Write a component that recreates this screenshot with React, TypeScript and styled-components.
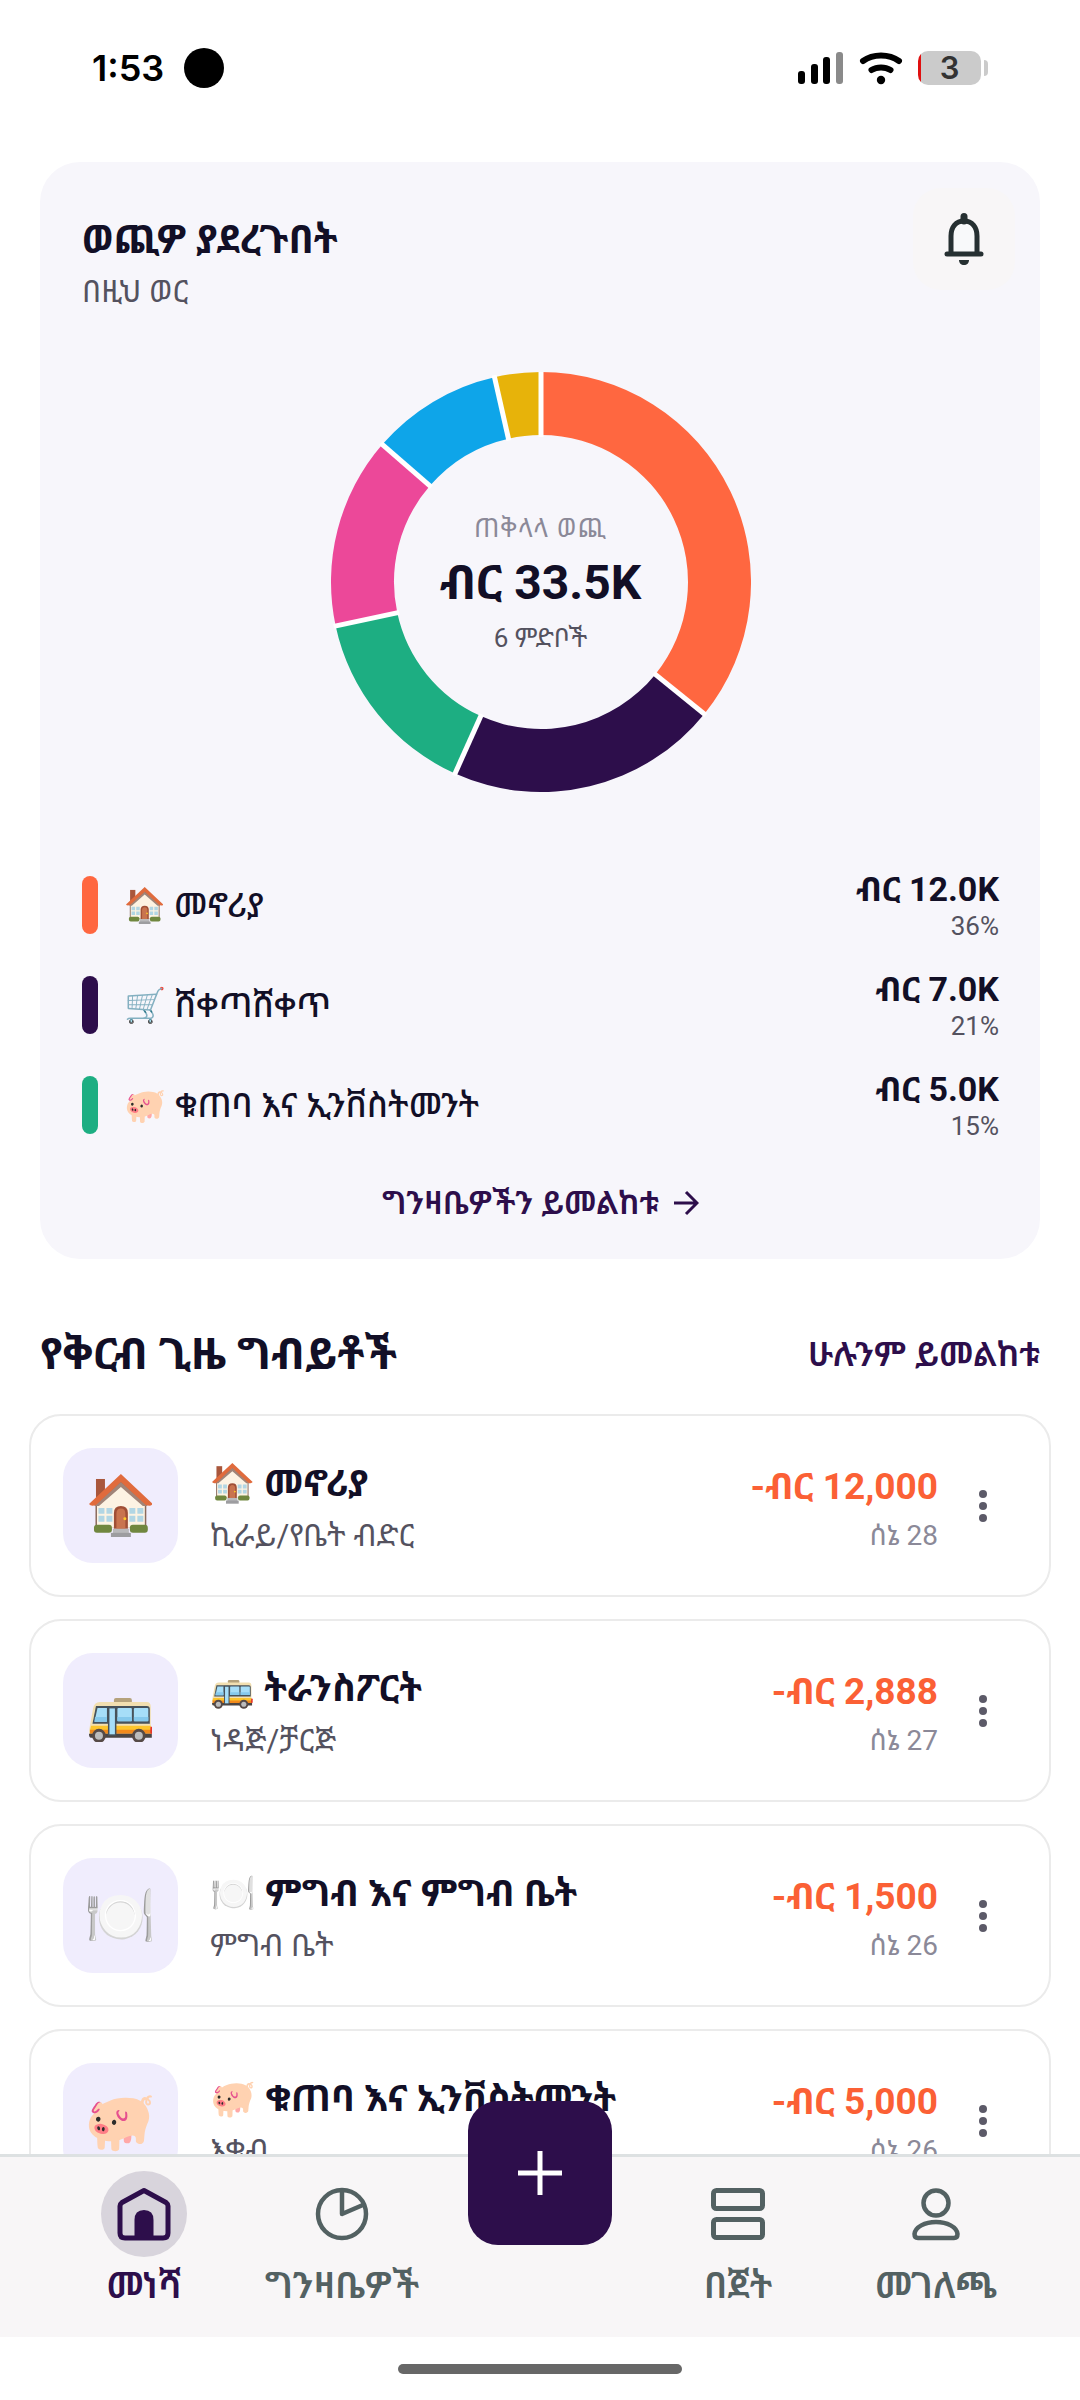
import * as React from "react";
import styled, { createGlobalStyle } from "styled-components";

type Emoji = "house" | "bus" | "cart" | "plate" | "pig";

interface Slice {
  value: number;
  color: string;
}

interface Category {
  emoji: Emoji;
  name: string;
  amount: string;
  percent: string;
  color: string;
}

interface Expense {
  emoji: Emoji;
  category: string;
  detail: string;
  amount: string;
  date: string;
}

const slices: Slice[] = [
  { value: 12, color: "#ff6740" },
  { value: 7, color: "#2d0e4b" },
  { value: 5, color: "#1dae82" },
  { value: 4.93, color: "#ec4899" },
  { value: 3.38, color: "#0ea5e9" },
  { value: 1.19, color: "#e7b30a" },
];

const categories: Category[] = [
  { emoji: "house", name: "መኖሪያ", amount: "ብር 12.0K", percent: "36%", color: "#ff6740" },
  { emoji: "cart", name: "ሸቀጣሸቀጥ", amount: "ብር 7.0K", percent: "21%", color: "#2d0e4b" },
  { emoji: "pig", name: "ቁጠባ እና ኢንቨስትመንት", amount: "ብር 5.0K", percent: "15%", color: "#1dae82" },
];

const expenses: Expense[] = [
  { emoji: "house", category: "መኖሪያ", detail: "ኪራይ/የቤት ብድር", amount: "-ብር 12,000", date: "ሰኔ 28" },
  { emoji: "bus", category: "ትራንስፖርት", detail: "ነዳጅ/ቻርጅ", amount: "-ብር 2,888", date: "ሰኔ 27" },
  { emoji: "plate", category: "ምግብ እና ምግብ ቤት", detail: "ምግብ ቤት", amount: "-ብር 1,500", date: "ሰኔ 26" },
  { emoji: "pig", category: "ቁጠባ እና ኢንቨስትመንት", detail: "እቁብ", amount: "-ብር 5,000", date: "ሰኔ 26" },
];

const HouseEmoji = () => (
  <EmojiSvg viewBox="0 0 64 64" aria-hidden="true">
    <rect x="7" y="5" width="9" height="20" fill="#a9573c" />
    <path d="M6.500 30 L32 7 L57.500 30 V54 H6.500 Z" fill="#8a6a5c" />
    <path d="M8 30 L32 10 L56 30 V54 H8 Z" fill="#fdf3e3" />
    <path d="M32 8 L59 32 L54 32 L32 13 L10 32 L5 32 Z" fill="#a08478" />
    <path d="M32 0 L64 30 Q62 33 57 31 L32 8 L7 31 Q2 33 0 30 Z" fill="#e06b3d" />
    <g fill="#b2d6e4">
      <path d="M9.500 34 h6 v6 h-6 Z M17.500 34 h6 v6 h-6 Z M9.500 42 h6 v6 h-6 Z M17.500 42 h6 v6 h-6 Z" />
      <path d="M40.500 34 h6 v6 h-6 Z M48.500 34 h6 v6 h-6 Z M40.500 42 h6 v6 h-6 Z M48.500 42 h6 v6 h-6 Z" />
    </g>
    <path d="M25 55 V39 Q25 32 32 32 Q39 32 39 39 V55 Z" fill="#a04f36" />
    <path d="M27.500 55 V40 Q27.500 34.500 32 34.500 Q36.500 34.500 36.500 40 V55 Z" fill="#c9744f" />
    <circle cx="36" cy="45" r="1.500" fill="#ffca28" />
    <rect x="5" y="51" width="18" height="8" rx="3" fill="#70873f" />
    <rect x="41" y="51" width="18" height="8" rx="3" fill="#70873f" />
    <rect x="24" y="55" width="16" height="5" fill="#b9b9bb" />
    <rect x="22" y="59" width="20" height="5" fill="#9d9da0" />
  </EmojiSvg>
);

const BusEmoji = () => (
  <EmojiSvg viewBox="0 0 64 64" aria-hidden="true">
    <rect x="25" y="19" width="18" height="7" rx="2" fill="#b5a27c" />
    <path d="M4 30 Q5 23 11 23 H58 Q62 23 62 28 V57 H2 Q0 57 0 52 Z" fill="#f2dfb0" />
    <path d="M7 27 H58 Q61 27 61 30 V45 H3.500 Z" fill="#47525a" />
    <path d="M8.500 29 H18 V43 H5.500 Z" fill="#a6def8" />
    <rect x="28.500" y="29" width="14.500" height="13.500" rx="1" fill="#a6def8" />
    <rect x="45" y="29" width="14.500" height="13.500" rx="1" fill="#a6def8" />
    <path d="M6 38 H18 V43 H5.500 Z M28.500 38 H43 V42.500 H28.500 Z M45 38 H59.500 V42.500 H45 Z" fill="#85c9ec" />
    <path d="M2 47 H62 V52 H1 Z" fill="#fcc52c" />
    <path d="M1 51 H63 V55 H1 Z" fill="#f28a1c" />
    <path d="M0 55 H63 V59 H2 Q0 59 0 55 Z" fill="#4b4543" />
    <rect x="19" y="28" width="8.500" height="29" fill="#47525a" />
    <rect x="20.500" y="29.500" width="5.500" height="26" fill="#a6def8" />
    <rect x="61.500" y="48" width="2.500" height="7" rx="1" fill="#e5352d" />
    <circle cx="10" cy="57" r="7" fill="#564a47" />
    <circle cx="10" cy="57" r="4" fill="#bcbcbc" />
    <circle cx="50" cy="57" r="7" fill="#564a47" />
    <circle cx="50" cy="57" r="4" fill="#bcbcbc" />
  </EmojiSvg>
);

const emojiGlyphs: Record<Emoji, React.ReactNode> = {
  house: <HouseEmoji />,
  bus: <BusEmoji />,
  cart: "🛒",
  plate: "🍽️",
  pig: "🐖",
};

const point = (angle: number, radius: number) =>
  `${210 + radius * Math.sin(angle)} ${210 - radius * Math.cos(angle)}`;

const ringPath = (from: number, to: number) => {
  const large = to - from > Math.PI ? 1 : 0;
  return [
    `M ${point(from, 210)}`,
    `A 210 210 0 ${large} 1 ${point(to, 210)}`,
    `L ${point(to, 147)}`,
    `A 147 147 0 ${large} 0 ${point(from, 147)}`,
    "Z",
  ].join(" ");
};

const Donut = () => {
  const total = slices.reduce((sum, slice) => sum + slice.value, 0);
  let start = 0;
  const arcs = slices.map((slice) => {
    const from = start;
    start += (slice.value / total) * Math.PI * 2;
    return { from, to: start, color: slice.color };
  });
  return (
    <DonutSvg viewBox="0 0 420 420" aria-hidden="true">
      {arcs.map((arc) => (
        <path key={arc.color} d={ringPath(arc.from, arc.to)} fill={arc.color} />
      ))}
      {arcs.map((arc) => (
        <path
          key={arc.color}
          d={`M ${point(arc.from, 145)} L ${point(arc.from, 212)}`}
          stroke="#ffffff"
          strokeWidth="5"
        />
      ))}
    </DonutSvg>
  );
};

const SignalIcon = () => (
  <svg width="46" height="34" viewBox="0 0 46 34" aria-hidden="true">
    <rect x="0" y="20" width="7" height="13" rx="3" />
    <rect x="13" y="13" width="7" height="20" rx="3" />
    <rect x="25" y="6" width="7" height="27" rx="3" />
    <rect x="38" y="1" width="7" height="32" rx="3" fill="#8a8a8a" />
  </svg>
);

const WifiIcon = () => (
  <svg width="44" height="34" viewBox="0 0 44 34" aria-hidden="true">
    <g fill="none" stroke="#000000" strokeWidth="6" strokeLinecap="round">
      <path d="M4 10 C14 2.500 30 2.500 40 10" />
      <path d="M12.500 19 C18 15.500 26 15.500 31.500 19" />
    </g>
    <circle cx="22" cy="29" r="4.200" />
  </svg>
);

const BellIcon = () => (
  <svg width="40" height="52" viewBox="0 0 40 52" aria-hidden="true">
    <path
      d="M7 40 V23 C7 14 12 8 20 8 C28 8 33 14 33 23 V40"
      fill="#f8f9fa"
      stroke="#263032"
      strokeWidth="5"
    />
    <path d="M3 41 H37" stroke="#263032" strokeWidth="5" strokeLinecap="round" />
    <path d="M20 3.500 V8" stroke="#263032" strokeWidth="7" strokeLinecap="round" />
    <path d="M15 47 H25 C25 50 23 52 20 52 C17 52 15 50 15 47 Z" fill="#263032" />
  </svg>
);

const ArrowIcon = () => (
  <svg width="26" height="26" viewBox="0 0 26 26" aria-hidden="true">
    <path d="M1 13 H24 M13 2 L24 13 L13 24" fill="none" stroke="#2d0e4b" strokeWidth="3" />
  </svg>
);

const DotsIcon = () => (
  <svg width="8" height="34" viewBox="0 0 8 34" fill="#5c5a68" aria-hidden="true">
    <circle cx="4" cy="5" r="4" />
    <circle cx="4" cy="17" r="4" />
    <circle cx="4" cy="29" r="4" />
  </svg>
);

const PlusIcon = () => (
  <svg width="44" height="44" viewBox="0 0 44 44" aria-hidden="true">
    <path d="M22 0 V44 M0 22 H44" stroke="#ffffff" strokeWidth="5" />
  </svg>
);

const HomeIcon = () => (
  <svg width="54" height="54" viewBox="0 0 54 54" aria-hidden="true">
    <path
      d="M27 3.500 L49 15.500 Q51 17 51 19 V46 Q51 51 46 51 H8 Q3 51 3 46 V19 Q3 17 5 15.500 Z"
      fill="none"
      stroke="currentColor"
      strokeWidth="5"
      strokeLinejoin="round"
    />
    <path d="M17.500 51 V33 Q17.500 23 27 23 Q36.500 23 36.500 33 V51 Z" fill="currentColor" />
  </svg>
);

const PieIcon = () => (
  <svg width="54" height="54" viewBox="0 0 54 54" aria-hidden="true">
    <g fill="none" stroke="currentColor" strokeWidth="4.500">
      <circle cx="27" cy="27" r="24" />
      <path d="M27 3 V27 L49 17.500" strokeLinejoin="round" />
    </g>
  </svg>
);

const BudgetIcon = () => (
  <svg width="54" height="54" viewBox="0 0 54 54" aria-hidden="true">
    <g fill="none" stroke="currentColor" strokeWidth="5">
      <rect x="2.500" y="3.500" width="49" height="18" rx="3" />
      <rect x="2.500" y="32.500" width="49" height="18" rx="3" />
    </g>
  </svg>
);

const ProfileIcon = () => (
  <svg width="54" height="54" viewBox="0 0 54 54" aria-hidden="true">
    <g fill="none" stroke="currentColor" strokeWidth="4.500">
      <circle cx="27" cy="16" r="12.500" />
      <path d="M9 51 Q5.500 51 5.500 47 C6 40 16 35 27 35 C38 35 48 40 48.500 47 Q48.500 51 45 51 Z" />
    </g>
  </svg>
);

const StatusRow = () => (
  <StatusBar>
    <Clock>
      1:53
      <Camera />
    </Clock>
    <StatusIcons>
      <SignalIcon />
      <WifiIcon />
      <Battery>
        <BatteryBody>3</BatteryBody>
        <BatteryTip />
      </Battery>
    </StatusIcons>
  </StatusBar>
);

const SpendingCard = () => (
  <Summary>
    <SummaryHeader>
      <div>
        <SummaryTitle>ወጪዎ ያደረጉበት</SummaryTitle>
        <SummaryPeriod>በዚህ ወር</SummaryPeriod>
      </div>
      <BellButton type="button" aria-label="notifications">
        <BellIcon />
      </BellButton>
    </SummaryHeader>
    <Chart>
      <Donut />
      <ChartCenter>
        <ChartLabel>ጠቅላላ ወጪ</ChartLabel>
        <ChartTotal>ብር 33.5K</ChartTotal>
        <ChartCount>6 ምድቦች</ChartCount>
      </ChartCenter>
    </Chart>
    <Legend>
      {categories.map((category) => (
        <LegendRow key={category.name}>
          <LegendMark color={category.color} />
          <LegendName>
            {emojiGlyphs[category.emoji]} {category.name}
          </LegendName>
          <div>
            <LegendAmount>{category.amount}</LegendAmount>
            <LegendPercent>{category.percent}</LegendPercent>
          </div>
        </LegendRow>
      ))}
    </Legend>
    <InsightsLink href="#insights">
      ግንዛቤዎችን ይመልከቱ
      <ArrowIcon />
    </InsightsLink>
  </Summary>
);

const ExpenseCard = ({ expense }: { expense: Expense }) => (
  <ExpenseItem>
    <ExpenseTile>{emojiGlyphs[expense.emoji]}</ExpenseTile>
    <ExpenseText>
      <ExpenseName>
        {emojiGlyphs[expense.emoji]} {expense.category}
      </ExpenseName>
      <ExpenseDetail>{expense.detail}</ExpenseDetail>
    </ExpenseText>
    <ExpenseFigures>
      <ExpenseAmount>{expense.amount}</ExpenseAmount>
      <ExpenseDate>{expense.date}</ExpenseDate>
    </ExpenseFigures>
    <MoreButton type="button" aria-label="more">
      <DotsIcon />
    </MoreButton>
  </ExpenseItem>
);

const BottomNav = () => (
  <Nav>
    <NavLink href="#home" $active>
      <NavIcon $active>
        <HomeIcon />
      </NavIcon>
      መነሻ
    </NavLink>
    <NavLink href="#insights">
      <NavIcon>
        <PieIcon />
      </NavIcon>
      ግንዛቤዎች
    </NavLink>
    <AddSlot>
      <AddButton type="button" aria-label="add">
        <PlusIcon />
      </AddButton>
    </AddSlot>
    <NavLink href="#budget">
      <NavIcon>
        <BudgetIcon />
      </NavIcon>
      በጀት
    </NavLink>
    <NavLink href="#profile">
      <NavIcon>
        <ProfileIcon />
      </NavIcon>
      መገለጫ
    </NavLink>
  </Nav>
);

export default function App() {
  return (
    <Screen>
      <GlobalStyle />
      <StatusRow />
      <Content>
        <SpendingCard />
        <SectionHeader>
          <SectionTitle>የቅርብ ጊዜ ግብይቶች</SectionTitle>
          <SectionLink href="#all">ሁሉንም ይመልከቱ</SectionLink>
        </SectionHeader>
        <ExpenseList>
          {expenses.map((expense) => (
            <ExpenseCard key={expense.category} expense={expense} />
          ))}
        </ExpenseList>
      </Content>
      <BottomNav />
      <HomeBar>
        <HomeIndicator />
      </HomeBar>
    </Screen>
  );
}

const GlobalStyle = createGlobalStyle`
  * {
    box-sizing: border-box;
  }
  body {
    margin: 0;
    background: #ffffff;
    color: #120f26;
    font-family: Roboto, "Noto Sans Ethiopic", "Noto Color Emoji", sans-serif;
  }
  h1, h2, p, ul {
    margin: 0;
    padding: 0;
  }
  ul {
    list-style: none;
  }
  button {
    border: 0;
    padding: 0;
    font: inherit;
    cursor: pointer;
  }
  a {
    text-decoration: none;
  }
  svg {
    display: block;
    flex-shrink: 0;
  }
`;

const EmojiSvg = styled.svg`
  display: inline-block;
  width: 1.1em;
  height: 1.1em;
  margin: 0 0.06em;
  vertical-align: -0.22em;
`;

const Screen = styled.div`
  display: flex;
  flex-direction: column;
  height: 100vh;
`;

const StatusBar = styled.header`
  display: flex;
  justify-content: space-between;
  align-items: center;
  height: 136px;
  padding: 0 92px;
`;
const Clock = styled.div`
  display: flex;
  align-items: center;
  gap: 20px;
  font-family: Inter, sans-serif;
  font-weight: 600;
  font-size: 36px;
  line-height: 40px;
  color: #000000;
`;
const Camera = styled.span`
  width: 40px;
  height: 40px;
  border-radius: 50%;
  background: #000000;
`;
const StatusIcons = styled.div`
  display: flex;
  align-items: center;
  gap: 15px;
`;
const Battery = styled.div`
  display: flex;
  align-items: center;
  gap: 3px;
`;
const BatteryBody = styled.div`
  width: 63px;
  height: 34px;
  border-radius: 10px;
  background: linear-gradient(to right, #e01010 3px, #cbcbcb 3px);
  font-family: Inter, sans-serif;
  font-weight: 600;
  font-size: 31px;
  line-height: 34px;
  text-align: center;
  color: #333333;
`;
const BatteryTip = styled.div`
  width: 4px;
  height: 16px;
  border-radius: 0 4px 4px 0;
  background: #cbcbcb;
`;

const Content = styled.main`
  flex: 1;
  min-height: 0;
  overflow: auto;
  scrollbar-width: none;
  padding: 26px 29px 0;
`;

const Summary = styled.section`
  margin: 0 11px;
  padding: 26px 41px 32px 42px;
  border-radius: 40px;
  background: #f7f6fb;
`;
const SummaryHeader = styled.div`
  display: flex;
  justify-content: space-between;
  align-items: flex-end;
  margin-right: -16px;
  height: 128px;
`;
const SummaryTitle = styled.h1`
  font-weight: 700;
  font-size: 39px;
  line-height: 56px;
`;
const SummaryPeriod = styled.p`
  font-size: 31px;
  line-height: 48px;
  color: #54525f;
`;
const BellButton = styled.button`
  display: flex;
  align-self: flex-start;
  justify-content: center;
  align-items: center;
  width: 102px;
  height: 102px;
  border-radius: 28px;
  background: #f8f6f7;
`;

const Chart = styled.div`
  display: grid;
  justify-items: center;
  align-items: center;
  margin: 56px 0 76px;
  > * {
    grid-area: 1 / 1;
  }
`;
const DonutSvg = styled.svg`
  width: 420px;
  height: 420px;
`;
const ChartCenter = styled.div`
  padding-top: 2px;
  text-align: center;
`;
const ChartLabel = styled.p`
  font-size: 26px;
  line-height: 38px;
  letter-spacing: 1px;
  color: #8b8998;
`;
const ChartTotal = styled.p`
  font-weight: 700;
  font-size: 48px;
  line-height: 72px;
`;
const ChartCount = styled.p`
  font-size: 26px;
  line-height: 38px;
  color: #54525f;
`;

const Legend = styled.ul`
  display: flex;
  flex-direction: column;
  gap: 26px;
`;
const LegendRow = styled.li`
  display: flex;
  align-items: center;
  text-align: right;
`;
const LegendMark = styled.span<{ color: string }>`
  width: 16px;
  height: 58px;
  border-radius: 8px;
  background: ${(props) => props.color};
`;
const LegendName = styled.p`
  flex: 1;
  padding-left: 26px;
  font-weight: 500;
  font-size: 34px;
  line-height: 42px;
  text-align: left;
`;
const LegendAmount = styled.p`
  font-weight: 700;
  font-size: 34px;
  line-height: 42px;
`;
const LegendPercent = styled.p`
  font-size: 26px;
  line-height: 32px;
  color: #54525f;
`;
const InsightsLink = styled.a`
  display: flex;
  justify-content: center;
  align-items: center;
  gap: 14px;
  margin-top: 37px;
  font-weight: 600;
  font-size: 32px;
  line-height: 48px;
  color: #2d0e4b;
`;

const SectionHeader = styled.div`
  display: flex;
  justify-content: space-between;
  align-items: center;
  margin: 64px 11px 29px;
`;
const SectionTitle = styled.h2`
  font-weight: 700;
  font-size: 44px;
  line-height: 62px;
`;
const SectionLink = styled.a`
  font-weight: 600;
  font-size: 34px;
  line-height: 42px;
  color: #2d0e4b;
`;

const ExpenseList = styled.ul`
  display: flex;
  flex-direction: column;
  gap: 22px;
`;
const ExpenseItem = styled.li`
  display: flex;
  align-items: center;
  padding: 32px 31px 32px 32px;
  border: 2px solid #ebebeb;
  border-radius: 32px;
  background: #ffffff;
`;
const ExpenseTile = styled.div`
  display: flex;
  justify-content: center;
  align-items: center;
  width: 115px;
  height: 115px;
  border-radius: 30px;
  background: #f0edfd;
  font-size: 58px;
  line-height: 72px;
`;
const ExpenseText = styled.div`
  flex: 1;
  padding: 4px 0 0 32px;
`;
const ExpenseName = styled.p`
  font-weight: 700;
  font-size: 37px;
  line-height: 56px;
`;
const ExpenseDetail = styled.p`
  font-size: 31px;
  line-height: 48px;
  color: #54525f;
`;
const ExpenseFigures = styled.div`
  padding-top: 4px;
  text-align: right;
`;
const ExpenseAmount = styled.p`
  font-weight: 700;
  font-size: 37px;
  line-height: 56px;
  color: #fb6035;
`;
const ExpenseDate = styled.p`
  font-size: 28px;
  line-height: 42px;
  color: #8b8998;
`;
const MoreButton = styled.button`
  display: flex;
  justify-content: center;
  align-items: center;
  width: 70px;
  height: 70px;
  margin-left: 10px;
  background: transparent;
`;

const Nav = styled.nav`
  display: grid;
  grid-template-columns: repeat(5, 1fr);
  padding: 14px 45px 26px;
  border-top: 3px solid #dde1e2;
  background: #f8f6f7;
`;
const NavLink = styled.a<{ $active?: boolean }>`
  display: flex;
  flex-direction: column;
  align-items: center;
  gap: 4px;
  font-weight: 600;
  font-size: 37px;
  line-height: 50px;
  white-space: nowrap;
  color: ${(props) => (props.$active ? "#2d0e4b" : "#536162")};
`;
const NavIcon = styled.span<{ $active?: boolean }>`
  display: flex;
  justify-content: center;
  align-items: center;
  width: 86px;
  height: 86px;
  border-radius: 50%;
  background: ${(props) => (props.$active ? "#d8d4dc" : "transparent")};
`;
const AddSlot = styled.div`
  position: relative;
`;
const AddButton = styled.button`
  position: absolute;
  bottom: 66px;
  left: 50%;
  transform: translateX(-50%);
  display: flex;
  justify-content: center;
  align-items: center;
  width: 144px;
  height: 144px;
  border-radius: 30px;
  background: #2d0e4b;
`;

const HomeBar = styled.footer`
  display: flex;
  justify-content: center;
  align-items: center;
  height: 63px;
  background: #ffffff;
`;
const HomeIndicator = styled.div`
  width: 284px;
  height: 10px;
  border-radius: 5px;
  background: #676767;
`;
